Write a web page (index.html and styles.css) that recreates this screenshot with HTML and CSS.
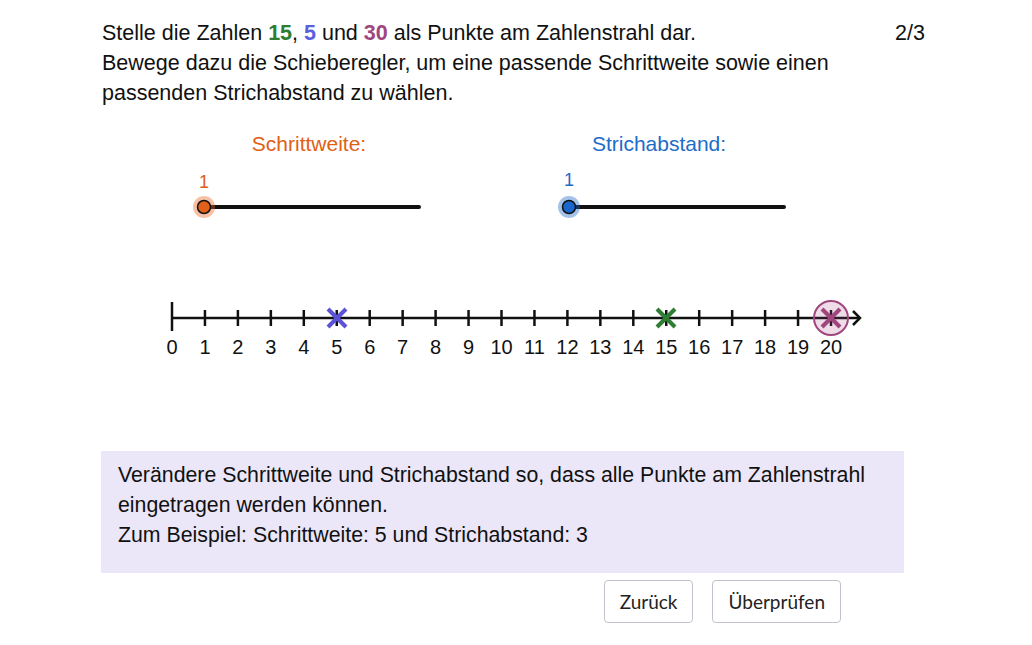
FILE: index.html
```html
<!DOCTYPE html>
<html lang="de">
<head>
    <meta charset="UTF-8">
    <meta name="viewport" content="width=device-width, initial-scale=1.0">
    <title>Zahlenstrahl</title>
    <link rel="stylesheet" href="styles.css">
</head>
<body>
    <div class="task">
        <p class="question">
            Stelle die Zahlen <b class="n15">15</b>, <b class="n5">5</b> und <b class="n30">30</b> als Punkte am Zahlenstrahl dar.<br>
            Bewege dazu die Schieberegler, um eine passende Schrittweite sowie einen<br>
            passenden Strichabstand zu wählen.
        </p>
        <span class="counter">2/3</span>
    </div>

    <svg class="applet" viewBox="0 108 1032 343" width="1032" height="343">
        <!-- slider: Schrittweite -->
        <text class="slider-title orange" x="309" y="151" text-anchor="middle">Schrittweite:</text>
        <text class="slider-value orange" x="204" y="188" text-anchor="middle">1</text>
        <line x1="204" y1="207" x2="419" y2="207" class="track"/>
        <circle cx="204" cy="207" r="11" fill="#e8651e" fill-opacity="0.4"/>
        <circle cx="204" cy="207" r="6.5" fill="#e0621a" stroke="#111" stroke-width="1.5"/>

        <!-- slider: Strichabstand -->
        <text class="slider-title blue" x="659" y="151" text-anchor="middle">Strichabstand:</text>
        <text class="slider-value blue" x="569" y="186" text-anchor="middle">1</text>
        <line x1="569" y1="207" x2="784" y2="207" class="track"/>
        <circle cx="569" cy="207" r="11" fill="#1e66c8" fill-opacity="0.4"/>
        <circle cx="569" cy="207" r="6.5" fill="#1a66cc" stroke="#111" stroke-width="1.5"/>

        <!-- number line -->
        <line x1="172" y1="318" x2="860" y2="318" class="axis"/>
        <polyline points="853,311 860,318 853,325" class="axis" fill="none"/>
        <line x1="172" y1="302" x2="172" y2="331" class="axis"/>
        <g id="ticks" class="axis"></g>
        <g id="labels" class="tick-label"></g>

        <!-- points -->
        <g class="cross" stroke="#5b52d8">
            <line x1="328" y1="309" x2="346" y2="327"/>
            <line x1="346" y1="309" x2="328" y2="327"/>
        </g>
        <g class="cross" stroke="#2e7d32">
            <line x1="657" y1="309" x2="675" y2="327"/>
            <line x1="675" y1="309" x2="657" y2="327"/>
        </g>
        <circle cx="831" cy="318" r="17" fill="#a0457e" fill-opacity="0.18" stroke="#a0457e" stroke-width="2"/>
        <g class="cross" stroke="#a0457e">
            <line x1="822" y1="309" x2="840" y2="327"/>
            <line x1="840" y1="309" x2="822" y2="327"/>
        </g>
    </svg>

    <div class="hint">
        Verändere Schrittweite und Strichabstand so, dass alle Punkte am Zahlenstrahl<br>
        eingetragen werden können.<br>
        Zum Beispiel: Schrittweite: 5 und Strichabstand: 3
    </div>

    <div class="actions">
        <button class="btn">Zurück</button>
        <button class="btn">Überprüfen</button>
    </div>

    <script>
        // ticks and numbers 0..20, about 33px apart
        var ticks = document.getElementById('ticks');
        var labels = document.getElementById('labels');
        var ns = 'http://www.w3.org/2000/svg';
        for (var i = 0; i <= 20; i++) {
            var x = 172 + i * 32.95;
            if (i > 0) {
                var t = document.createElementNS(ns, 'line');
                t.setAttribute('x1', x); t.setAttribute('x2', x);
                t.setAttribute('y1', 310); t.setAttribute('y2', 326);
                ticks.appendChild(t);
            }
            var l = document.createElementNS(ns, 'text');
            l.setAttribute('x', x);
            l.setAttribute('y', 354);
            l.setAttribute('text-anchor', 'middle');
            l.textContent = i;
            labels.appendChild(l);
        }
    </script>
</body>
</html>
```

FILE: styles.css
```css
body {
    margin: 0;
    padding: 0;
    background: #fff;
    font-family: "Liberation Sans", Arial, sans-serif;
    color: #111;
}

.task {
    display: flex;
    justify-content: space-between;
    padding: 18px 107px 0 102px;
}

.question {
    margin: 0;
    font-size: 21.5px;
    line-height: 30px;
}

.question b {
    font-weight: bold;
}

.n15 { color: #2e7d32; }
.n5 { color: #5b5fe0; }
.n30 { color: #a0457e; }

.counter {
    font-size: 21.5px;
    line-height: 30px;
}

.applet {
    display: block;
}

.track {
    stroke: #111;
    stroke-width: 4;
    stroke-linecap: round;
}

.axis {
    stroke: #111;
    stroke-width: 2.5;
}

.cross line {
    stroke-width: 4;
}

.slider-title {
    font-family: "Liberation Sans", Arial, sans-serif;
    font-size: 21px;
}

.slider-value {
    font-family: "Liberation Sans", Arial, sans-serif;
    font-size: 18px;
}

.orange { fill: #e06014; }
.blue { fill: #1c6cc8; }

.tick-label {
    font-family: "Liberation Sans", Arial, sans-serif;
    font-size: 20px;
    fill: #111;
}

.hint {
    margin-left: 101px;
    width: 803px;
    box-sizing: border-box;
    height: 122px;
    padding: 9px 17px 0;
    background-color: #ebe7f8;
    font-size: 21.3px;
    line-height: 30px;
}

.actions {
    display: flex;
    justify-content: flex-end;
    gap: 19px;
    margin-top: 7px;
    padding-right: 191px;
}

.btn {
    height: 43px;
    padding: 0 15px;
    background: #fff;
    border: 1px solid #c2c2cc;
    border-radius: 4px;
    font-family: Lato, "Liberation Sans", sans-serif;
    font-size: 19px;
    color: #222;
}
```
